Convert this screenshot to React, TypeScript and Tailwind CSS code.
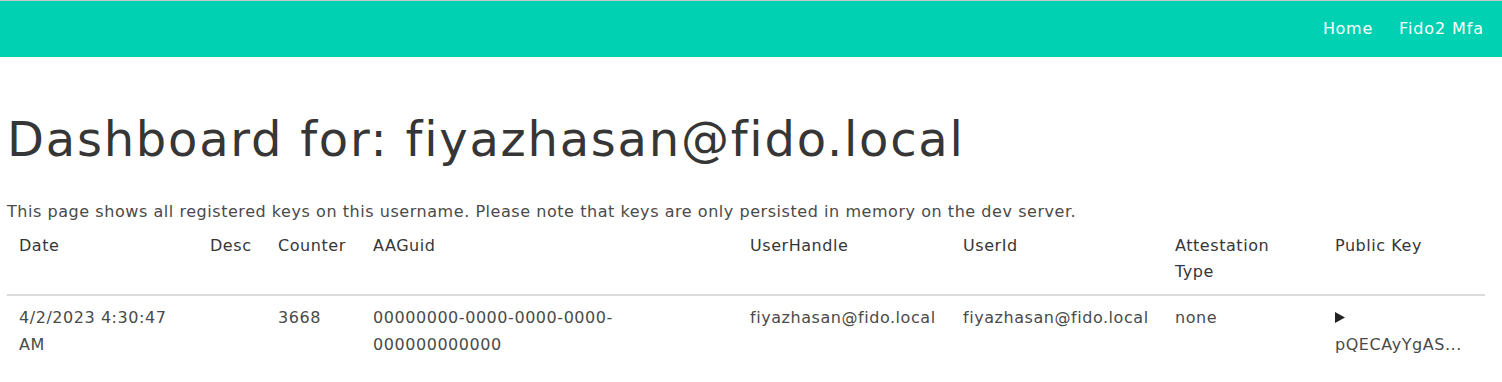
import React from "react";

export default function App() {
  const headers = ["Date", "Desc", "Counter", "AAGuid", "UserHandle", "UserId", "Attestation Type", "Public Key"];
  const widths = [191, 68, 95, 377, 213, 212, 160, 162];
  return (
    <div className="min-h-screen bg-white font-['DejaVu_Sans',_'Open_Sans',_sans-serif] tracking-[0.55px] text-[#4a4a4a]">
      <div className="h-px bg-[#c8c8c8]" />
      <nav className="flex h-[56px] items-center justify-end bg-[#00d1b2] pr-[6px]">
        <a className="pl-3 pr-[14px] text-[16px] tracking-[0.7px] text-white">Home</a>
        <a className="px-3 text-[16px] tracking-[0.9px] text-white">Fido2 Mfa</a>
      </nav>
      <main className="px-[7px] pt-[55px]">
        <h1 className="text-[48px] leading-[1.125] tracking-[1.75px] text-[#363636]">Dashboard for: fiyazhasan@fido.local</h1>
        <p className="mt-[33px] text-[16px] leading-[26px]">
          This page shows all registered keys on this username. Please note that keys are only persisted in memory on the dev server.
        </p>
        <table className="w-[1478px] table-fixed border-collapse text-[16px] leading-[26px]">
          <colgroup>
            {widths.map((w, i) => (
              <col key={i} style={{ width: w }} />
            ))}
          </colgroup>
          <thead>
            <tr>
              {headers.map((h) => (
                <th key={h} className="border-b-2 border-[#dbdbdb] px-3 pt-2 pb-[9px] text-left align-top font-normal text-[#363636]">
                  {h}
                </th>
              ))}
            </tr>
          </thead>
          <tbody className="leading-[27px]">
            <tr>
              <td className="px-3 py-2 align-top">4/2/2023 4:30:47 AM</td>
              <td className="px-3 py-2 align-top"></td>
              <td className="px-3 py-2 align-top">3668</td>
              <td className="px-3 py-2 align-top">00000000-0000-0000-0000-000000000000</td>
              <td className="px-3 py-2 align-top">fiyazhasan@fido.local</td>
              <td className="px-3 py-2 align-top">fiyazhasan@fido.local</td>
              <td className="px-3 py-2 align-top">none</td>
              <td className="px-3 py-2 align-top">
                <div className="flex h-[27px] items-center">
                  <svg width="10" height="11" viewBox="0 0 10 11" className="text-[#222]">
                    <path d="M0 0 L10 5.5 L0 11 Z" fill="currentColor" />
                  </svg>
                </div>
                <div>pQECAyYgAS...</div>
              </td>
            </tr>
          </tbody>
        </table>
      </main>
    </div>
  );
}
